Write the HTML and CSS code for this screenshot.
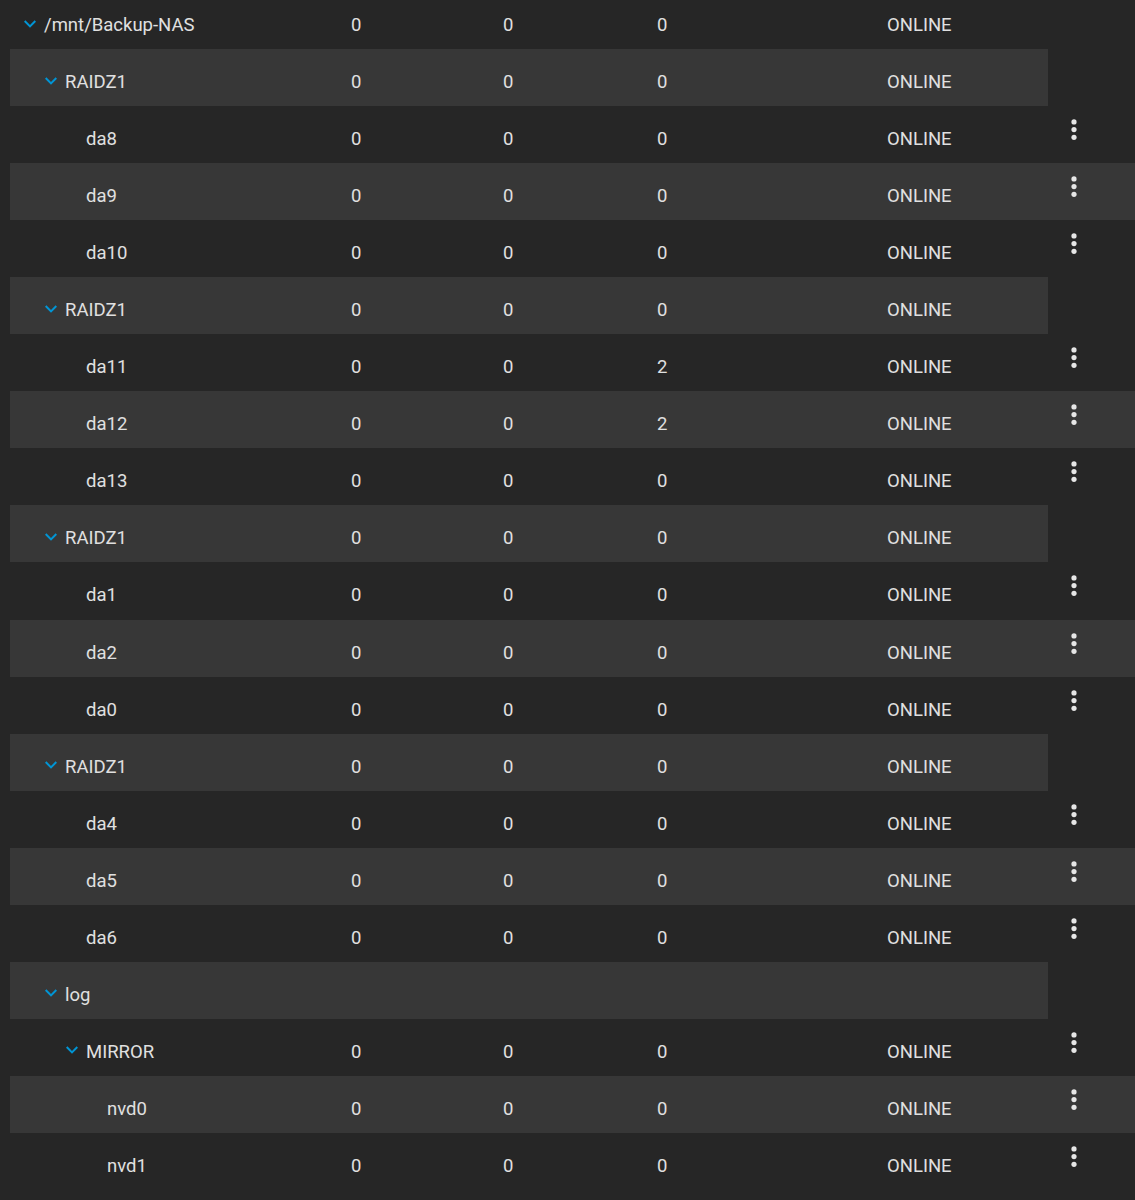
FILE: index.html
```html
<!DOCTYPE html>
<html lang="en">
<head>
  <meta charset="UTF-8" />
  <meta name="viewport" content="width=device-width, initial-scale=1.0"/>
  <title>Pool Status - Backup-NAS</title>
  <link rel="stylesheet" href="styles.css">
</head>
<body>

  <div class="pool-table">

    <div class="row group">
      <div class="cells">
        <div class="name lvl0"><span class="toggle"><svg width="12" height="8" viewBox="6 8.59 12 7.41"><path d="M16.59 8.59L12 13.17 7.41 8.59 6 10l6 6 6-6z"/></svg></span>/mnt/Backup-NAS</div>
        <div>0</div><div>0</div><div>0</div><div>ONLINE</div>
      </div>
    </div>

    <!-- vdev 1 -->
    <div class="row group alt">
      <div class="cells">
        <div class="name lvl1"><span class="toggle"><svg width="12" height="8" viewBox="6 8.59 12 7.41"><path d="M16.59 8.59L12 13.17 7.41 8.59 6 10l6 6 6-6z"/></svg></span>RAIDZ1</div>
        <div>0</div><div>0</div><div>0</div><div>ONLINE</div>
      </div>
    </div>
    <div class="row">
      <div class="cells">
        <div class="name lvl2"><span class="toggle"></span>da8</div>
        <div>0</div><div>0</div><div>0</div><div>ONLINE</div>
      </div>
      <div class="action"><svg width="6" height="22" viewBox="0 0 6 22"><circle cx="3" cy="2.9" r="2.6"/><circle cx="3" cy="10.6" r="2.6"/><circle cx="3" cy="18.3" r="2.6"/></svg></div>
    </div>
    <div class="row alt">
      <div class="cells">
        <div class="name lvl2"><span class="toggle"></span>da9</div>
        <div>0</div><div>0</div><div>0</div><div>ONLINE</div>
      </div>
      <div class="action"><svg width="6" height="22" viewBox="0 0 6 22"><circle cx="3" cy="2.9" r="2.6"/><circle cx="3" cy="10.6" r="2.6"/><circle cx="3" cy="18.3" r="2.6"/></svg></div>
    </div>
    <div class="row">
      <div class="cells">
        <div class="name lvl2"><span class="toggle"></span>da10</div>
        <div>0</div><div>0</div><div>0</div><div>ONLINE</div>
      </div>
      <div class="action"><svg width="6" height="22" viewBox="0 0 6 22"><circle cx="3" cy="2.9" r="2.6"/><circle cx="3" cy="10.6" r="2.6"/><circle cx="3" cy="18.3" r="2.6"/></svg></div>
    </div>

    <!-- vdev 2 -->
    <div class="row group alt">
      <div class="cells">
        <div class="name lvl1"><span class="toggle"><svg width="12" height="8" viewBox="6 8.59 12 7.41"><path d="M16.59 8.59L12 13.17 7.41 8.59 6 10l6 6 6-6z"/></svg></span>RAIDZ1</div>
        <div>0</div><div>0</div><div>0</div><div>ONLINE</div>
      </div>
    </div>
    <div class="row">
      <div class="cells">
        <div class="name lvl2"><span class="toggle"></span>da11</div>
        <div>0</div><div>0</div><div>2</div><div>ONLINE</div>
      </div>
      <div class="action"><svg width="6" height="22" viewBox="0 0 6 22"><circle cx="3" cy="2.9" r="2.6"/><circle cx="3" cy="10.6" r="2.6"/><circle cx="3" cy="18.3" r="2.6"/></svg></div>
    </div>
    <div class="row alt">
      <div class="cells">
        <div class="name lvl2"><span class="toggle"></span>da12</div>
        <div>0</div><div>0</div><div>2</div><div>ONLINE</div>
      </div>
      <div class="action"><svg width="6" height="22" viewBox="0 0 6 22"><circle cx="3" cy="2.9" r="2.6"/><circle cx="3" cy="10.6" r="2.6"/><circle cx="3" cy="18.3" r="2.6"/></svg></div>
    </div>
    <div class="row">
      <div class="cells">
        <div class="name lvl2"><span class="toggle"></span>da13</div>
        <div>0</div><div>0</div><div>0</div><div>ONLINE</div>
      </div>
      <div class="action"><svg width="6" height="22" viewBox="0 0 6 22"><circle cx="3" cy="2.9" r="2.6"/><circle cx="3" cy="10.6" r="2.6"/><circle cx="3" cy="18.3" r="2.6"/></svg></div>
    </div>

    <!-- vdev 3 -->
    <div class="row group alt">
      <div class="cells">
        <div class="name lvl1"><span class="toggle"><svg width="12" height="8" viewBox="6 8.59 12 7.41"><path d="M16.59 8.59L12 13.17 7.41 8.59 6 10l6 6 6-6z"/></svg></span>RAIDZ1</div>
        <div>0</div><div>0</div><div>0</div><div>ONLINE</div>
      </div>
    </div>
    <div class="row">
      <div class="cells">
        <div class="name lvl2"><span class="toggle"></span>da1</div>
        <div>0</div><div>0</div><div>0</div><div>ONLINE</div>
      </div>
      <div class="action"><svg width="6" height="22" viewBox="0 0 6 22"><circle cx="3" cy="2.9" r="2.6"/><circle cx="3" cy="10.6" r="2.6"/><circle cx="3" cy="18.3" r="2.6"/></svg></div>
    </div>
    <div class="row alt">
      <div class="cells">
        <div class="name lvl2"><span class="toggle"></span>da2</div>
        <div>0</div><div>0</div><div>0</div><div>ONLINE</div>
      </div>
      <div class="action"><svg width="6" height="22" viewBox="0 0 6 22"><circle cx="3" cy="2.9" r="2.6"/><circle cx="3" cy="10.6" r="2.6"/><circle cx="3" cy="18.3" r="2.6"/></svg></div>
    </div>
    <div class="row">
      <div class="cells">
        <div class="name lvl2"><span class="toggle"></span>da0</div>
        <div>0</div><div>0</div><div>0</div><div>ONLINE</div>
      </div>
      <div class="action"><svg width="6" height="22" viewBox="0 0 6 22"><circle cx="3" cy="2.9" r="2.6"/><circle cx="3" cy="10.6" r="2.6"/><circle cx="3" cy="18.3" r="2.6"/></svg></div>
    </div>

    <!-- vdev 4 -->
    <div class="row group alt">
      <div class="cells">
        <div class="name lvl1"><span class="toggle"><svg width="12" height="8" viewBox="6 8.59 12 7.41"><path d="M16.59 8.59L12 13.17 7.41 8.59 6 10l6 6 6-6z"/></svg></span>RAIDZ1</div>
        <div>0</div><div>0</div><div>0</div><div>ONLINE</div>
      </div>
    </div>
    <div class="row">
      <div class="cells">
        <div class="name lvl2"><span class="toggle"></span>da4</div>
        <div>0</div><div>0</div><div>0</div><div>ONLINE</div>
      </div>
      <div class="action"><svg width="6" height="22" viewBox="0 0 6 22"><circle cx="3" cy="2.9" r="2.6"/><circle cx="3" cy="10.6" r="2.6"/><circle cx="3" cy="18.3" r="2.6"/></svg></div>
    </div>
    <div class="row alt">
      <div class="cells">
        <div class="name lvl2"><span class="toggle"></span>da5</div>
        <div>0</div><div>0</div><div>0</div><div>ONLINE</div>
      </div>
      <div class="action"><svg width="6" height="22" viewBox="0 0 6 22"><circle cx="3" cy="2.9" r="2.6"/><circle cx="3" cy="10.6" r="2.6"/><circle cx="3" cy="18.3" r="2.6"/></svg></div>
    </div>
    <div class="row">
      <div class="cells">
        <div class="name lvl2"><span class="toggle"></span>da6</div>
        <div>0</div><div>0</div><div>0</div><div>ONLINE</div>
      </div>
      <div class="action"><svg width="6" height="22" viewBox="0 0 6 22"><circle cx="3" cy="2.9" r="2.6"/><circle cx="3" cy="10.6" r="2.6"/><circle cx="3" cy="18.3" r="2.6"/></svg></div>
    </div>

    <!-- log -->
    <div class="row group alt">
      <div class="cells">
        <div class="name lvl1"><span class="toggle"><svg width="12" height="8" viewBox="6 8.59 12 7.41"><path d="M16.59 8.59L12 13.17 7.41 8.59 6 10l6 6 6-6z"/></svg></span>log</div>
        <div></div><div></div><div></div><div></div>
      </div>
    </div>
    <div class="row">
      <div class="cells">
        <div class="name lvl2"><span class="toggle"><svg width="12" height="8" viewBox="6 8.59 12 7.41"><path d="M16.59 8.59L12 13.17 7.41 8.59 6 10l6 6 6-6z"/></svg></span>MIRROR</div>
        <div>0</div><div>0</div><div>0</div><div>ONLINE</div>
      </div>
      <div class="action"><svg width="6" height="22" viewBox="0 0 6 22"><circle cx="3" cy="2.9" r="2.6"/><circle cx="3" cy="10.6" r="2.6"/><circle cx="3" cy="18.3" r="2.6"/></svg></div>
    </div>
    <div class="row alt">
      <div class="cells">
        <div class="name lvl3"><span class="toggle"></span>nvd0</div>
        <div>0</div><div>0</div><div>0</div><div>ONLINE</div>
      </div>
      <div class="action"><svg width="6" height="22" viewBox="0 0 6 22"><circle cx="3" cy="2.9" r="2.6"/><circle cx="3" cy="10.6" r="2.6"/><circle cx="3" cy="18.3" r="2.6"/></svg></div>
    </div>
    <div class="row">
      <div class="cells">
        <div class="name lvl3"><span class="toggle"></span>nvd1</div>
        <div>0</div><div>0</div><div>0</div><div>ONLINE</div>
      </div>
      <div class="action"><svg width="6" height="22" viewBox="0 0 6 22"><circle cx="3" cy="2.9" r="2.6"/><circle cx="3" cy="10.6" r="2.6"/><circle cx="3" cy="18.3" r="2.6"/></svg></div>
    </div>

  </div>

</body>
</html>
```

FILE: styles.css
```css
body {
  margin: 0;
  background-color: #262626;
  color: #e0e0e0;
  font-family: Roboto, "Liberation Sans", sans-serif;
  font-size: 18.5px;
  overflow: hidden;
}

.pool-table {
  margin-top: -8px;
  margin-left: 10px;
  width: 1125px;
}

.row {
  display: flex;
  height: 57.05px;
}

.row.alt {
  background-color: #373737;
}

/* group rows (pool, vdevs, log) have no action column, stripe stops short */
.row.group.alt {
  background-color: transparent;
}

.row.group.alt .cells {
  background-color: #373737;
}

.cells {
  display: grid;
  grid-template-columns: 341px 152px 154px 230px 161px;
  align-items: center;
  width: 1038px;
  padding-top: 9px;
  box-sizing: border-box;
}

.name {
  display: flex;
  align-items: center;
}

.lvl0 { padding-left: 14px; }
.lvl1 { padding-left: 35px; }
.lvl2 { padding-left: 56px; }
.lvl3 { padding-left: 77px; }

.toggle {
  display: inline-flex;
  width: 20px;
  margin-bottom: 3px;
}

.toggle svg {
  fill: #0095d5;
}

.action {
  width: 87px;
  padding-top: 13px;
  padding-left: 23px;
  box-sizing: border-box;
}

.action svg {
  display: block;
  fill: #e6e6e6;
}
```
